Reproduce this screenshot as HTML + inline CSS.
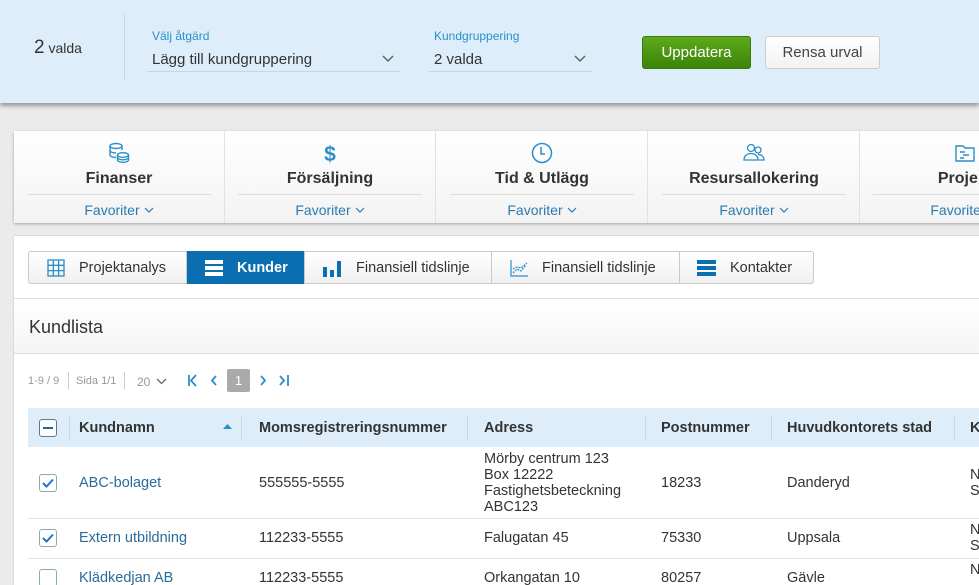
<!DOCTYPE html>
<html><head><meta charset="utf-8"><style>
*{box-sizing:border-box;margin:0;padding:0}
html{width:979px;height:585px;overflow:hidden}
body{width:979px;height:585px;overflow:hidden;background:#ebebeb;font-family:"Liberation Sans","DejaVu Sans",sans-serif;color:#333;position:relative}
.a{position:absolute;white-space:nowrap}
.top{position:absolute;left:0;top:0;width:979px;height:103px;background:#ddeefa;box-shadow:0 3px 4px rgba(0,0,0,.35)}
.lbl{font-size:12px;color:#2a8fc8}
.sel{font-size:15px;color:#333}
.line{position:absolute;height:1px;background:#c8d6e0}
.btn{position:absolute;top:36px;height:33px;border-radius:3px;font-size:15px;text-align:center;line-height:31px}
.tiles{position:absolute;left:14px;top:131px;width:980px;height:92px;background:linear-gradient(#fff,#f3f3f3);box-shadow:0 1px 3px rgba(0,0,0,.3)}
.tile{position:absolute;top:0;height:92px;width:211px;border-right:1px solid #e2e2e2}
.tile .t{position:absolute;top:39px;width:100%;text-align:center;font-size:16px;font-weight:bold;color:#333}
.tile .s{position:absolute;left:13px;right:13px;top:63px;height:1px;background:#ddd}
.tile .f{position:absolute;top:71px;width:100%;text-align:center;font-size:14px;color:#2a7ab0}
.tile .f svg{position:static;margin-left:4px;vertical-align:2px}
.tile>svg{position:absolute;top:11px;left:50%;margin-left:-11px}
.panel{position:absolute;left:14px;top:236px;width:970px;height:349px;background:#fff;box-shadow:0 0 2px rgba(0,0,0,.2)}
.tabs{position:absolute;left:28px;top:251px;height:33px;border:1px solid #c9c9c9;border-radius:3px;background:linear-gradient(#fff,#f0f0f0)}
.tab{position:absolute;top:0;height:31px;font-size:14.5px;line-height:33px;color:#333;border-right:1px solid #c9c9c9}
.tab svg{position:absolute;top:7px}
.th{font-size:14.5px;font-weight:bold;color:#333}
.td{font-size:14.5px;color:#333}
.lnk{color:#2a6b99}
.cb{position:absolute;width:18px;height:18px;border:1px solid #8aa;border-radius:3px;background:#fff}
.vd{position:absolute;top:416px;width:1px;height:24px;background:#c5d9e6}
.hr{position:absolute;left:28px;width:960px;height:1px;background:#e3e3e3}
</style></head><body>
<div class="top"></div>
<div class="a" style="left:34px;top:37px;font-size:19px;color:#333">2<span style="font-size:14px"> valda</span></div>
<div class="a" style="left:124px;top:14px;width:1px;height:66px;background:#c8d6e0"></div>
<div class="a lbl" style="left:152px;top:29px">Välj åtgärd</div>
<div class="a sel" style="left:152px;top:51px">Lägg till kundgruppering</div>
<svg class="a" style="left:382px;top:55px" width="12" height="8"><path d="M1 1l5 5 5-5" stroke="#555" fill="none" stroke-width="1.3"/></svg>
<div class="line" style="left:147px;top:71px;width:253px"></div>
<div class="a lbl" style="left:434px;top:29px">Kundgruppering</div>
<div class="a sel" style="left:434px;top:51px">2 valda</div>
<svg class="a" style="left:574px;top:55px" width="12" height="8"><path d="M1 1l5 5 5-5" stroke="#555" fill="none" stroke-width="1.3"/></svg>
<div class="line" style="left:429px;top:71px;width:163px"></div>
<div class="btn" style="left:642px;width:109px;background:linear-gradient(#5ea91c,#3b8507);color:#fff;border:1px solid #3a7a0e">Uppdatera</div>
<div class="btn" style="left:765px;width:115px;background:linear-gradient(#fff,#f2f2f2);color:#444;border:1px solid #ccc">Rensa urval</div>

<div class="tiles">
<div class="tile" style="left:0"><svg width="22" height="22" viewBox="0 0 22 22" fill="none" stroke="#2a8fc8" stroke-width="1.4"><ellipse cx="8" cy="4" rx="6" ry="2.5"/><path d="M2 4v9c0 1.4 2.7 2.5 6 2.5M14 4v4M2 8.5c0 1.4 2.7 2.5 6 2.5"/><ellipse cx="15" cy="13" rx="5.5" ry="2.3"/><path d="M9.5 13v5c0 1.3 2.5 2.3 5.5 2.3s5.5-1 5.5-2.3v-5M9.5 15.5c0 1.3 2.5 2.3 5.5 2.3s5.5-1 5.5-2.3"/></svg><div class="t">Finanser</div><div class="s"></div><div class="f">Favoriter<svg width="10" height="6"><path d="M1 1l4 4 4-4" stroke="#2a7ab0" fill="none" stroke-width="1.2"/></svg></div></div>
<div class="tile" style="left:211px"><svg width="22" height="22" viewBox="0 0 22 22"><text x="11" y="19" text-anchor="middle" font-size="21" font-weight="bold" fill="#2a8fc8" font-family="Liberation Sans">$</text></svg><div class="t">Försäljning</div><div class="s"></div><div class="f">Favoriter<svg width="10" height="6"><path d="M1 1l4 4 4-4" stroke="#2a7ab0" fill="none" stroke-width="1.2"/></svg></div></div>
<div class="tile" style="left:423px"><svg width="22" height="22" viewBox="0 0 22 22" fill="none" stroke="#2a8fc8" stroke-width="1.5"><circle cx="11" cy="11" r="9.5"/><path d="M10 5v7h4"/></svg><div class="t">Tid &amp; Utlägg</div><div class="s"></div><div class="f">Favoriter<svg width="10" height="6"><path d="M1 1l4 4 4-4" stroke="#2a7ab0" fill="none" stroke-width="1.2"/></svg></div></div>
<div class="tile" style="left:635px"><svg width="22" height="22" viewBox="0 0 22 22" fill="none" stroke="#2a8fc8" stroke-width="1.3"><circle cx="8" cy="6" r="3.5"/><path d="M1 18c0-4 3-6.5 7-6.5s7 2.5 7 6.5z"/><circle cx="15" cy="8" r="3"/><path d="M15 12.5c3.5 0 6 2 6 5.5h-5"/></svg><div class="t">Resursallokering</div><div class="s"></div><div class="f">Favoriter<svg width="10" height="6"><path d="M1 1l4 4 4-4" stroke="#2a7ab0" fill="none" stroke-width="1.2"/></svg></div></div>
<div class="tile" style="left:846px"><svg width="22" height="22" viewBox="0 0 22 22" fill="none" stroke="#2a8fc8" stroke-width="1.4"><path d="M2 4h7l2 2h9v13H2z"/><path d="M6 10h5M9 13h6M6 16h4"/></svg><div class="t">Projekt</div><div class="s"></div><div class="f">Favoriter<svg width="10" height="6"><path d="M1 1l4 4 4-4" stroke="#2a7ab0" fill="none" stroke-width="1.2"/></svg></div></div>
</div>

<div class="panel"></div>
<div class="tabs" style="width:786px">
<div class="tab" style="left:0;width:158px"><svg style="left:18px" width="18" height="18" viewBox="0 0 18 18" fill="none" stroke="#2a8fc8" stroke-width="1.3"><rect x="1" y="1" width="16" height="16"/><path d="M1 6.3h16M1 11.6h16M6.3 1v16M11.6 1v16"/></svg><span style="position:absolute;left:50px">Projektanalys</span></div>
<div class="tab" style="left:158px;width:118px;background:#0a6fb0;color:#fff;font-weight:bold;top:-1px;height:33px;line-height:35px"><svg style="left:18px;top:8px" width="18" height="18"><rect y="1" width="18" height="4" fill="#fff"/><rect y="7" width="18" height="4" fill="#fff"/><rect y="13" width="18" height="4" fill="#fff"/></svg><span style="position:absolute;left:50px">Kunder</span></div>
<div class="tab" style="left:276px;width:187px"><svg style="left:18px" width="18" height="18"><rect x="0" y="8" width="4" height="10" fill="#0a6fb0"/><rect x="7" y="11" width="4" height="7" fill="#0a6fb0"/><rect x="14" y="2" width="4" height="16" fill="#0a6fb0"/></svg><span style="position:absolute;left:51px">Finansiell tidslinje</span></div>
<div class="tab" style="left:463px;width:188px"><svg style="left:18px" width="19" height="18" viewBox="0 0 19 18" fill="none" stroke="#2a8fc8" stroke-width="1.2"><path d="M1 1v16h17"/><path d="M3 14l4-4 4 2 5-6M3 10l4-2 4 1 6-5" stroke-dasharray="2 1"/></svg><span style="position:absolute;left:50px">Finansiell tidslinje</span></div>
<div class="tab" style="left:651px;width:133px;border-right:none"><svg style="left:17px" width="19" height="18"><rect y="1" width="19" height="4" fill="#0a6fb0"/><rect y="7" width="19" height="4" fill="#0a6fb0"/><rect y="13" width="19" height="4" fill="#0a6fb0"/></svg><span style="position:absolute;left:50px">Kontakter</span></div>
</div>
<div class="a" style="left:14px;top:298px;width:970px;height:56px;background:linear-gradient(#fff,#f5f5f5);border-top:1px solid #e0e0e0;border-bottom:1px solid #ddd"></div>
<div class="a" style="left:29px;top:317px;font-size:18px;color:#333">Kundlista</div>

<div class="a" style="left:28px;top:375px;font-size:11px;color:#999">1-9 / 9</div>
<div class="a" style="left:68px;top:372px;width:1px;height:17px;background:#ccc"></div>
<div class="a" style="left:76px;top:375px;font-size:11px;color:#999">Sida 1/1</div>
<div class="a" style="left:124px;top:372px;width:1px;height:17px;background:#ccc"></div>
<div class="a" style="left:137px;top:375px;font-size:12px;color:#999">20</div>
<svg class="a" style="left:156px;top:378px" width="11" height="7"><path d="M1 1l4.5 4.5L10 1" stroke="#666" fill="none" stroke-width="1.3"/></svg>
<svg class="a" style="left:187px;top:374px" width="104" height="14" fill="none" stroke="#2a8fc8" stroke-width="1.8"><path d="M2 1v11M9 1L4 6.5 9 12"/><path d="M29 2l-4 4.5 4 4.5"/><path d="M74 2l4 4.5-4 4.5"/><path d="M93 2l4 4.5-4 4.5M101 1v11"/></svg>
<div class="a" style="left:227px;top:369px;width:23px;height:23px;background:#aaa;border-radius:2px;color:#fff;font-size:13px;text-align:center;line-height:23px">1</div>

<div class="a" style="left:28px;top:408px;width:960px;height:39px;background:#ddeefa"></div>
<div class="cb" style="left:39px;top:419px;border-color:#5a7890"><div style="position:absolute;left:3px;top:7px;width:10px;height:2px;background:#1a6aa0"></div></div>
<div class="vd" style="left:69px"></div><div class="vd" style="left:241px"></div><div class="vd" style="left:467px"></div><div class="vd" style="left:645px"></div><div class="vd" style="left:771px"></div><div class="vd" style="left:954px"></div>
<div class="a th" style="left:79px;top:420px">Kundnamn</div>
<svg class="a" style="left:223px;top:424px" width="9" height="5"><path d="M0 5l4.5-5L9 5z" fill="#2a8fc8"/></svg>
<div class="a th" style="left:259px;top:420px">Momsregistreringsnummer</div>
<div class="a th" style="left:484px;top:420px">Adress</div>
<div class="a th" style="left:661px;top:420px">Postnummer</div>
<div class="a th" style="left:787px;top:420px">Huvudkontorets stad</div>
<div class="a th" style="left:970px;top:420px">K</div>

<div class="cb" style="left:39px;top:474px"><svg width="16" height="16" style="position:absolute;left:0;top:0"><path d="M3 8l3.5 3.5L13 4.5" stroke="#1a7ac0" stroke-width="2" fill="none"/></svg></div>
<div class="a td lnk" style="left:79px;top:475px">ABC-bolaget</div>
<div class="a td" style="left:259px;top:475px">555555-5555</div>
<div class="a td" style="left:484px;top:451px;line-height:16px;white-space:pre">Mörby centrum 123
Box 12222
Fastighetsbeteckning
ABC123</div>
<div class="a td" style="left:661px;top:475px">18233</div>
<div class="a td" style="left:787px;top:475px">Danderyd</div>
<div class="a td" style="left:970px;top:467px;line-height:16px">N<br>S</div>
<div class="hr" style="top:518px"></div>

<div class="cb" style="left:39px;top:529px"><svg width="16" height="16" style="position:absolute;left:0;top:0"><path d="M3 8l3.5 3.5L13 4.5" stroke="#1a7ac0" stroke-width="2" fill="none"/></svg></div>
<div class="a td lnk" style="left:79px;top:530px">Extern utbildning</div>
<div class="a td" style="left:259px;top:530px">112233-5555</div>
<div class="a td" style="left:484px;top:530px">Falugatan 45</div>
<div class="a td" style="left:661px;top:530px">75330</div>
<div class="a td" style="left:787px;top:530px">Uppsala</div>
<div class="a td" style="left:970px;top:522px;line-height:16px">N<br>S</div>
<div class="hr" style="top:558px"></div>

<div class="cb" style="left:39px;top:569px"></div>
<div class="a td lnk" style="left:79px;top:570px">Klädkedjan AB</div>
<div class="a td" style="left:259px;top:570px">112233-5555</div>
<div class="a td" style="left:484px;top:570px">Orkangatan 10</div>
<div class="a td" style="left:661px;top:570px">80257</div>
<div class="a td" style="left:787px;top:570px">Gävle</div>
<div class="a td" style="left:970px;top:562px">N</div>
</body></html>
